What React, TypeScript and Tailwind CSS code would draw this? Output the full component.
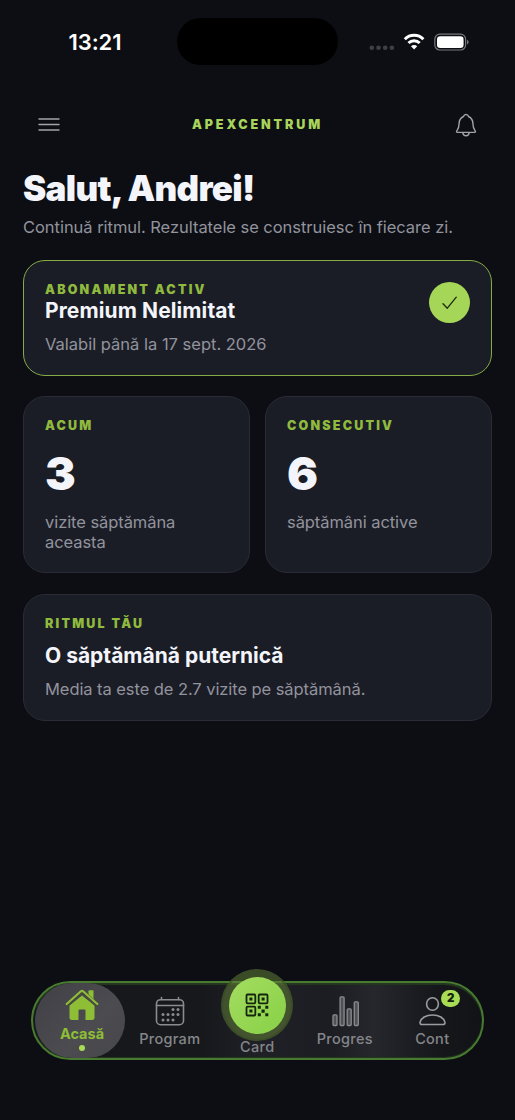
import type { ReactNode } from 'react'

function StatusBar() {
  return (
    <div className="h-[84px] pt-[18px] flex justify-between items-start">
      <div className="w-[177px] h-12 pl-[13px] flex items-center justify-center text-[22px] font-semibold tracking-[-0.1px] text-white">13:21</div>
      <div className="w-[161px] h-[47px] rounded-full bg-black" />
      <div className="w-[177px] h-[47px] flex items-center pl-[31px]">
        <svg className="w-[102px] h-6" viewBox="0 0 102 24" fill="none">
          <g fill="#3f4045">
            <circle cx="2.8" cy="17.8" r="2.3" /><circle cx="9.5" cy="17.8" r="2.3" /><circle cx="16.2" cy="17.8" r="2.3" /><circle cx="22.9" cy="17.8" r="2.3" />
          </g>
          <g stroke="#fff" strokeWidth="3">
            <path d="M35.8 9.2a13.2 13.2 0 0118.6 0" />
            <path d="M39.5 13a7.9 7.9 0 0111.2 0" />
          </g>
          <path d="M42 16.2a4.4 4.4 0 016.2 0L45.1 19.6z" fill="#fff" />
          <rect x="65.8" y="4.2" width="30.8" height="15.8" rx="5" stroke="#77787c" strokeWidth="1.2" />
          <rect x="68" y="6.2" width="26.6" height="11.8" rx="3.2" fill="#fff" />
          <path d="M98 10v4.4c1.1-.4 1.6-1.2 1.6-2.2S99.1 10.4 98 10z" fill="#77787c" />
        </svg>
      </div>
    </div>
  )
}

function Header() {
  return (
    <header className="h-[82px] px-[38px] flex items-center justify-between">
      <svg className="w-[22px] h-4" viewBox="0 0 22 16" stroke="#a2a3ab" strokeWidth="1.4" strokeLinecap="round">
        <path d="M1 2h20M1 7.500h20M1 13h20" />
      </svg>
      <span className="text-[12.500px] font-black tracking-[2.9px] text-[#a9d45c]">APEXCENTRUM</span>
      <svg className="w-[22px] h-6" viewBox="0 0 22 24" fill="none" stroke="#a2a3ab" strokeWidth="1.4" strokeLinecap="round" strokeLinejoin="round">
        <path d="M11 1.500c-1.300 0-2.200.8-2.500 2C5.700 4.700 4.200 7.200 4.100 10.500c-.1 3.400-.7 5.400-2 6.900-.9 1-.7 2 .5 2h16.800c1.200 0 1.400-1 .5-2-1.300-1.500-1.900-3.500-2-6.900-.1-3.300-1.600-5.800-4.400-7-.3-1.200-1.200-2-2.500-2z" />
        <path d="M7.800 19.600c.2 1.900 1.500 3.200 3.200 3.200s3-1.300 3.200-3.200" />
      </svg>
    </header>
  )
}

function Label({ children }: { children: ReactNode }) {
  return <div className="text-[12.500px] leading-4 font-black tracking-[2.2px] text-[#8fba3e]">{children}</div>
}

function StatCard({ label, value, text }: { label: string; value: number; text: string }) {
  return (
    <div className="h-[177px] rounded-[22px] border border-[#292b36] bg-[#1b1d26] px-[21px] pt-[21px]">
      <Label>{label}</Label>
      <div className="mt-[11px] text-[46px] leading-[56px] font-black text-[#f4f5fa]">{value}</div>
      <p className="mt-[11px] w-[150px] text-[16.500px] leading-5 tracking-[-0.07px] text-[#92939d]">{text}</p>
    </div>
  )
}

function NavItem({ label, children }: { label: string; children: ReactNode }) {
  return (
    <div className="w-[87.500px] h-full pt-[13px] flex flex-col items-center">
      {children}
      <span className="mt-[2px] text-[14.500px] leading-[18px] font-medium tracking-[0.300px] text-[#85868a]">{label}</span>
    </div>
  )
}

function HomeIcon() {
  return (
    <svg className="w-[34px] h-8" viewBox="0 0 34 32" fill="#8dbe36">
      <path d="M4.500 16.500L17 6.500l12.500 10V28.500a2.500 2.500 0 01-2.500 2.500h-6.500V21.500a1 1 0 00-1-1h-5a1 1 0 00-1 1V31H7a2.500 2.500 0 01-2.500-2.500z" />
      <path d="M23.500 2.200a1 1 0 011-1h3a1 1 0 011 1V12l-5-4z" />
      <path d="M1.700 16L15.900 3.300a1.700 1.700 0 012.200 0L32.300 16" fill="none" stroke="#47483f" strokeWidth="4" />
      <path d="M1.700 15L15.900 2.300a1.700 1.700 0 012.200 0L32.300 15" fill="none" stroke="#8dbe36" strokeWidth="2.200" strokeLinecap="round" />
    </svg>
  )
}

const calendarDots = [[18, 14], [23, 14], [8, 19], [13, 19], [18, 19], [23, 19], [8, 24.3], [13, 24.3], [18, 24.3]]

function CalendarIcon() {
  return (
    <svg className="w-[30px] h-8" viewBox="0 0 30 32" fill="none" stroke="#8a8b8f" strokeWidth="1.600" strokeLinecap="round">
      <rect x="1.500" y="3.700" width="27" height="25" rx="4" />
      <path d="M1.500 9.500h27M6.500 1.500V3.500M23.500 1.500V3.500" />
      {calendarDots.map(([x, y]) => <circle key={`${x}-${y}`} cx={x} cy={y - 0.4} r="1.500" fill="#8a8b8f" stroke="none" />)}
    </svg>
  )
}

function ProgressIcon() {
  return (
    <svg className="w-[30px] h-8" viewBox="0 0 30 32" fill="#505155" stroke="#8a8b8f" strokeWidth="1.300">
      <rect x="3" y="18.800" width="4" height="10.700" rx="1" />
      <rect x="10.100" y="0.800" width="4" height="28.700" rx="1" />
      <rect x="17.200" y="12.800" width="4" height="16.700" rx="1" />
      <rect x="24.300" y="5.800" width="4" height="23.700" rx="1" />
    </svg>
  )
}

function QrIcon() {
  return (
    <svg className="w-6 h-6" viewBox="0 0 24 24" fill="#15260c">
      <g fill="none" stroke="#15260c" strokeWidth="1.800">
        <rect x="1.500" y="1.500" width="8.800" height="8.800" rx="1" />
        <rect x="13.700" y="1.500" width="8.800" height="8.800" rx="1" />
        <rect x="1.500" y="13.700" width="8.800" height="8.800" rx="1" />
      </g>
      <path d="M4.400 4.400h3v3h-3zM16.600 4.400h3v3h-3zM4.400 16.600h3v3h-3z" />
      <path d="M12.800 12.800h3v3h-3zM20.300 12.800h3v3h-3zM16.500 16.500h3.200v3.200h-3.200zM12.800 20.300h3v3h-3zM20.300 20.300h3v3h-3z" />
    </svg>
  )
}

function TabBar() {
  return (
    <nav className="mx-[31px] h-[79px] rounded-full border-2 border-[#487a30] bg-[linear-gradient(90deg,#16181c_0%,#16181c_38%,#202126_50%,#1c1d22_66%,#26272c_76%,#15171b_90%,#111317_100%)] shadow-[inset_0_2px_1px_#24381f,inset_0_-1px_1px_#24381f] flex pl-[2px]">
      <div className="mr-[1px] w-[90px] h-[75px] rounded-full bg-[linear-gradient(135deg,#404046,#4b4b50_60%,#46464b)] flex flex-col items-center pl-[4px] pt-[6px] shrink-0">
        <HomeIcon />
        <span className="mt-1 text-[14.500px] leading-[18px] font-bold tracking-[0px] text-[#8dbe36]">Acasă</span>
        <span className="mt-[2px] w-1.5 h-1.5 rounded-full bg-[#a8dc55]" />
      </div>
      <NavItem label="Program"><CalendarIcon /></NavItem>
      <div className="w-[87.500px] flex flex-col items-center">
        <div className="-mt-[14px] w-[72px] h-[72px] shrink-0 rounded-full bg-[#618036]/55 border-2 border-[#3a4a28]/60 flex items-center justify-center">
          <div className="w-[57px] h-[57px] shrink-0 rounded-full bg-[linear-gradient(135deg,#a4dc60,#88d147)] flex items-center justify-center">
            <QrIcon />
          </div>
        </div>
        <span className="-mt-[3px] text-[14.500px] leading-[18px] font-medium tracking-[0.300px] text-[#85868a]">Card</span>
      </div>
      <NavItem label="Progres"><ProgressIcon /></NavItem>
      <NavItem label="Cont">
        <div className="relative">
          <svg className="w-[30px] h-8" viewBox="0 0 30 32" fill="none" stroke="#9a9b9f" strokeWidth="1.600" strokeLinejoin="round">
            <ellipse cx="15.500" cy="8" rx="5.900" ry="6.300" />
            <path d="M5 28.500c-1.500 0-2.200-.9-1.900-2.300.9-4.200 5.900-7.200 12.400-7.200s11.500 3 12.400 7.200c.3 1.400-.4 2.300-1.900 2.300z" />
          </svg>
          <span className="absolute left-6 -top-[6px] w-[19px] h-[17px] rounded-full bg-[#a8dc55] flex items-center justify-center text-[11.500px] leading-none font-black text-[#15200c]">2</span>
        </div>
      </NavItem>
    </nav>
  )
}

export default function App() {
  return (
    <div className="w-[515px] h-[1120px] bg-[#0c0e13] font-[Inter,sans-serif] flex flex-col overflow-hidden">
      <StatusBar />
      <Header />
      <main className="px-[23px] pt-px flex-1">
        <h1 className="text-[35px] leading-[42px] font-black tracking-[-0.7px] text-[#f4f5fa]">Salut, Andrei!</h1>
        <p className="mt-[7px] text-[16.500px] leading-[22px] tracking-[-0.04px] text-[#92939d]">Continuă ritmul. Rezultatele se construiesc în fiecare zi.</p>

        <section className="mt-[22px] h-[116px] rounded-[22px] border border-[#86ab46] bg-[#1b1d26] px-[21px] pt-[21px] flex justify-between">
          <div>
            <Label>ABONAMENT ACTIV</Label>
            <h2 className="mt-px text-[21px] leading-6 font-bold tracking-[0.1px] text-[#f4f5fa]">Premium Nelimitat</h2>
            <p className="mt-[11px] text-[16.500px] leading-5 text-[#92939d]">Valabil până la 17 sept. 2026</p>
          </div>
          <div className="w-[41px] h-[41px] rounded-full bg-[#a5d657] flex items-center justify-center">
            <svg className="w-4 h-4" viewBox="0 0 16 16" fill="none" stroke="#1b2a10" strokeWidth="1.300" strokeLinecap="round" strokeLinejoin="round">
              <path d="M1 8.800l4.300 4.400 9-11" />
            </svg>
          </div>
        </section>

        <div className="mt-5 grid grid-cols-2 gap-[15px]">
          <StatCard label="ACUM" value={3} text="vizite săptămâna aceasta" />
          <StatCard label="CONSECUTIV" value={6} text="săptămâni active" />
        </div>

        <section className="mt-[21px] h-[127px] rounded-[22px] border border-[#292b36] bg-[#1b1d26] px-[21px] pt-[21px]">
          <Label>RITMUL TĂU</Label>
          <h2 className="mt-3 text-[21px] leading-6 font-bold text-[#f4f5fa]">O săptămână puternică</h2>
          <p className="mt-[11px] text-[16.500px] leading-5 tracking-[-0.07px] text-[#92939d]">Media ta este de 2.7 vizite pe săptămână.</p>
        </section>
      </main>
      <div className="pb-[60px]">
        <TabBar />
      </div>
    </div>
  )
}
